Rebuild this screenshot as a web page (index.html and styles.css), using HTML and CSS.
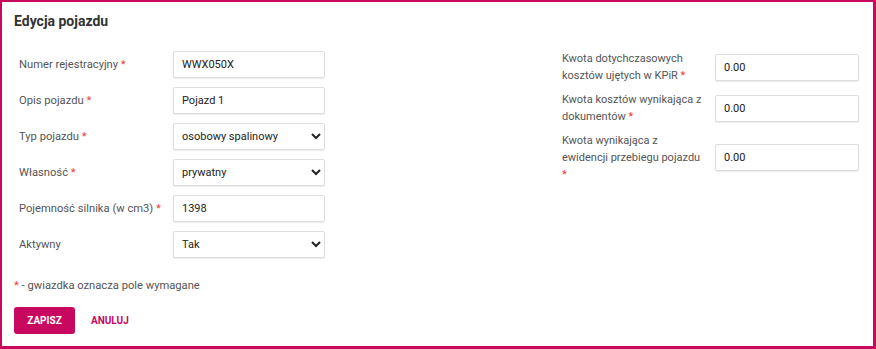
FILE: index.html
```html
<!DOCTYPE html>
<html lang="pl">
<head>
    <meta charset="utf-8">
    <link rel="stylesheet" href="styles.css">
</head>
<body>
    <div class="panel">
        <div class="title">Edycja pojazdu</div>

        <div class="columns">
            <!-- lewa kolumna -->
            <div class="col-left">
                <div class="row">
                    <label>Numer rejestracyjny <span class="req">*</span></label>
                    <input type="text" value="WWX050X">
                </div>
                <div class="row">
                    <label>Opis pojazdu <span class="req">*</span></label>
                    <input type="text" value="Pojazd 1">
                </div>
                <div class="row">
                    <label>Typ pojazdu <span class="req">*</span></label>
                    <select><option>osobowy spalinowy</option></select>
                </div>
                <div class="row">
                    <label>Własność <span class="req">*</span></label>
                    <select><option>prywatny</option></select>
                </div>
                <div class="row">
                    <label>Pojemność silnika (w cm3) <span class="req">*</span></label>
                    <input type="text" value="1398">
                </div>
                <div class="row">
                    <label>Aktywny</label>
                    <select><option>Tak</option></select>
                </div>
            </div>

            <!-- prawa kolumna -->
            <div class="col-right">
                <div class="row-r">
                    <label>Kwota dotychczasowych kosztów ujętych w KPiR <span class="req">*</span></label>
                    <input type="text" value="0.00">
                </div>
                <div class="row-r">
                    <label>Kwota kosztów wynikająca z dokumentów <span class="req">*</span></label>
                    <input type="text" value="0.00">
                </div>
                <div class="row-r">
                    <label>Kwota wynikająca z ewidencji przebiegu pojazdu <span class="req">*</span></label>
                    <input type="text" value="0.00">
                </div>
            </div>
        </div>

        <p class="note"><span class="req">*</span> - gwiazdka oznacza pole wymagane</p>

        <div class="buttons">
            <button class="btn-save">ZAPISZ</button>
            <button class="btn-cancel">ANULUJ</button>
        </div>
    </div>
</body>
</html>
```

FILE: styles.css
```css
body {
    margin: 0;
    font-family: Roboto, "Liberation Sans", Arial, sans-serif;
    background: white;
}

.panel {
    box-sizing: border-box;
    width: 876px;
    height: 349px;
    border: 2px solid #c8075e;
    border-right-width: 3px;
    border-bottom-width: 3px;
    padding: 11px 12px 0 12px;
}

.title {
    font-size: 14px;
    font-weight: bold;
    color: #333;
    line-height: 17px;
}

.columns {
    display: flex;
    margin-top: 21px;
}

/* lewa kolumna */
.col-left {
    width: 311px;
    padding-left: 5px;
}

.row {
    display: flex;
    align-items: center;
    height: 27px;
    margin-bottom: 9px;
}

.row label {
    width: 154px;
    font-size: 11.2px;
    color: #555;
}

.req {
    color: #e53935;
}

input, select {
    box-sizing: border-box;
    height: 27px;
    border: 1px solid #ddd;
    border-radius: 2px;
    box-shadow: 0 1px 1px rgba(0, 0, 0, 0.08);
    background: white;
    font-family: Roboto, "Liberation Sans", Arial, sans-serif;
    font-size: 11px;
    color: #222;
    padding: 0 8px;
    outline: none;
}

select {
    padding-left: 4px;
}

.row input, .row select {
    width: 152px;
}

/* prawa kolumna */
.col-right {
    margin-left: 232px;
    margin-top: -1px;
}

.row-r {
    display: flex;
    align-items: center;
    margin-bottom: 7px;
}

.row-r label {
    width: 142px;
    margin-right: 11px;
    font-size: 11px;
    line-height: 17px;
    color: #555;
}

.row-r input {
    width: 144px;
}

.note {
    margin: 12px 0 0 0;
    font-size: 11.2px;
    color: #555;
}

.buttons {
    display: flex;
    align-items: center;
    margin-top: 15px;
}

.btn-save {
    width: 61px;
    height: 27px;
    border: none;
    border-radius: 3px;
    background: #c8075e;
    color: white;
    font-family: Roboto, "Liberation Sans", Arial, sans-serif;
    font-size: 10px;
    font-weight: bold;
}

.btn-cancel {
    margin-left: 10px;
    border: none;
    background: none;
    color: #c8075e;
    font-family: Roboto, "Liberation Sans", Arial, sans-serif;
    font-size: 10px;
    font-weight: bold;
}
```
